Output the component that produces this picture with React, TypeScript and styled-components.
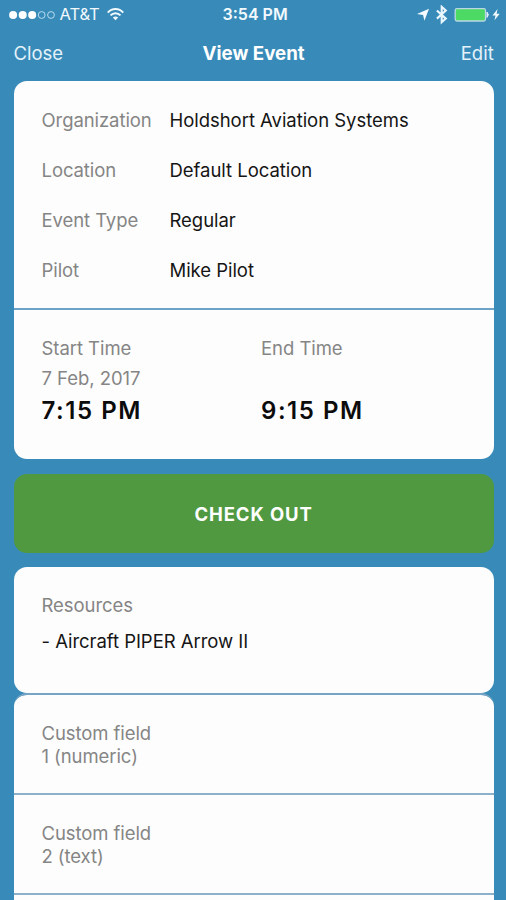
import React from "react";
import styled, { createGlobalStyle } from "styled-components";

const Global = createGlobalStyle`
  * { box-sizing: border-box; }
  html, body { margin: 0; background: #388bb9; }
  body { font-family: Inter, "Liberation Sans", sans-serif; }
`;

const Screen = styled.div`
  width: 506px;
  height: 900px;
  overflow: hidden;
  background: #388bb9;
  display: flex;
  flex-direction: column;
  padding: 0 12.3px 0 13.5px;
`;

const StatusBar = styled.div`
  display: grid;
  grid-template-columns: 1fr auto 1fr;
  align-items: center;
  height: 29px;
  flex: none;
  margin: 0 -6px 0 -5px;
  color: #f2f9fd;
`;

const Carrier = styled.div`
  display: flex;
  align-items: center;
  font-size: 16.5px;
  letter-spacing: -0.1px;
  line-height: 29px;
`;

const CarrierName = styled.span`
  margin: 0 7px 0 5px;
`;

const Clock = styled.div`
  font-size: 16px;
  font-weight: 600;
  line-height: 29px;
  margin-left: 2px;
`;

const Indicators = styled.div`
  display: flex;
  align-items: center;
  justify-content: flex-end;
`;

const NavBar = styled.div`
  display: grid;
  grid-template-columns: 1fr auto 1fr;
  align-items: center;
  height: 52px;
  flex: none;
  padding-bottom: 3px;
  color: #fff;
`;

const NavAction = styled.button<{ $end?: boolean }>`
  border: 0;
  padding: 0 0 2px;
  background: none;
  font: 400 18.5px/24px Inter, sans-serif;
  color: #e4f2fa;
  text-align: ${(p) => (p.$end ? "right" : "left")};
`;

const NavTitle = styled.h1`
  margin: 0;
  font-size: 18.7px;
  font-weight: 700;
  line-height: 24px;
`;

const Card = styled.section<{ $height: number; $gap?: number; $seam?: boolean }>`
  flex: none;
  height: ${(p) => p.$height}px;
  margin-bottom: ${(p) => p.$gap ?? 0}px;
  border-top: ${(p) => (p.$seam ? "2px solid #76a4c4" : "0")};
  border-radius: 13px;
  background: #fdfdfd;
  background-clip: padding-box;
`;

const Details = styled.dl`
  margin: 0;
  height: 228.5px;
  padding: 14px 28px 0;
  border-bottom: 2px solid #6ea3c8;
`;

const DetailRow = styled.div`
  display: grid;
  grid-template-columns: 128px 1fr;
  align-items: center;
  height: 50px;
`;

const Label = styled.dt`
  font-size: 18.5px;
  line-height: 23px;
  letter-spacing: -0.08px;
  color: #858585;
`;

const Value = styled.dd`
  margin: 0;
  font-size: 18.5px;
  line-height: 23px;
  letter-spacing: -0.04px;
  color: #151515;
`;

const Times = styled.div`
  display: grid;
  grid-template-columns: 219.5px 1fr;
  padding: 24px 28px 0;
`;

const TimeColumn = styled.div`
  display: grid;
  grid-template-rows: 29px 30px 36px;
  align-items: center;
`;

const Caption = styled.span`
  font-size: 18.5px;
  letter-spacing: -0.05px;
  color: #858585;
`;

const Time = styled.strong`
  font-size: 24px;
  font-weight: 600;
  letter-spacing: 1.55px;
  color: #0c0c0c;
`;

const CheckOut = styled.button`
  flex: none;
  height: 79px;
  margin: 0 0 14px;
  padding: 1px 0 0;
  border: 0;
  border-radius: 13px;
  background: #509941;
  color: #fff;
  font: 700 18.5px/24px Inter, sans-serif;
  letter-spacing: 0.9px;
`;

const Resources = styled.div`
  display: grid;
  grid-template-rows: 36px 37px;
  align-items: center;
  padding: 20.5px 28px 0;
`;

const CustomField = styled.div`
  height: 100.2px;
  padding: 27px 28px 0;
  border-bottom: 2px solid #8db1cb;
  font-size: 18.5px;
  line-height: 23px;
  letter-spacing: -0.08px;
  color: #858585;
`;

const CustomName = styled.div`
  width: 122px;
`;

const SignalDots = () => (
  <svg width="46" height="12" viewBox="0 0 46 12">
    {[4.1, 13.7, 23.2].map((x) => (
      <circle key={x} cx={x} cy="6" r="4" fill="#fff" />
    ))}
    {[32.7, 42].map((x) => (
      <circle key={x} cx={x} cy="6" r="3.4" fill="none" stroke="#b7dcef" strokeWidth="1" />
    ))}
  </svg>
);

const Wifi = () => (
  <svg width="17" height="13" viewBox="0 0 17 13" fill="none" stroke="#f2f9fd" strokeWidth="2">
    <path d="M.8 4.6C5-.1 12-.1 16.2 4.6M3.5 7.4c2.8-3 7.2-3 10 0" />
    <path d="M8.5 12.3 5.8 9.6c1.6-1.5 3.8-1.5 5.4 0Z" fill="#f2f9fd" stroke="none" />
  </svg>
);

const StatusIcons = () => (
  <svg width="84" height="20" viewBox="416 5 84 20">
    <path d="M429 8.7 424.4 20.7 423.1 14.9 417 14Z" fill="#f5fbff" />
    <path d="M436.9 10.5 445.8 18.6 441.7 22.2V6.8L445.8 10.5 436.9 18.6" fill="none" stroke="#eaf6fd" strokeWidth="2.1" />
    <rect x="455.2" y="8.6" width="30.3" height="12.4" rx="1.8" fill="#4cd964" stroke="#b9d8e3" strokeWidth="1.3" />
    <path d="M487 12.1q2.6 2.6 0 5.3Z" fill="#e2f1f7" stroke="#e2f1f7" />
    <path d="M497.6 9 492.5 15.4H495.5L494.5 20.3 499.7 13.7H496.6Z" fill="#f5fbff" />
  </svg>
);

const details = [
  ["Organization", "Holdshort Aviation Systems"],
  ["Location", "Default Location"],
  ["Event Type", "Regular"],
  ["Pilot", "Mike Pilot"],
];

const customFields = ["Custom field 1 (numeric)", "Custom field 2 (text)"];

export default function App() {
  return (
    <Screen>
      <Global />
      <StatusBar>
        <Carrier>
          <SignalDots />
          <CarrierName>AT&amp;T</CarrierName>
          <Wifi />
        </Carrier>
        <Clock>3:54 PM</Clock>
        <Indicators>
          <StatusIcons />
        </Indicators>
      </StatusBar>
      <NavBar>
        <NavAction>Close</NavAction>
        <NavTitle>View Event</NavTitle>
        <NavAction $end>Edit</NavAction>
      </NavBar>
      <Card $height={378} $gap={14.5}>
        <Details>
          {details.map(([label, value]) => (
            <DetailRow key={label}>
              <Label>{label}</Label>
              <Value>{value}</Value>
            </DetailRow>
          ))}
        </Details>
        <Times>
          <TimeColumn>
            <Caption>Start Time</Caption>
            <Caption>7 Feb, 2017</Caption>
            <Time>7:15 PM</Time>
          </TimeColumn>
          <TimeColumn>
            <Caption>End Time</Caption>
            <span />
            <Time>9:15 PM</Time>
          </TimeColumn>
        </Times>
      </Card>
      <CheckOut>CHECK OUT</CheckOut>
      <Card $height={126.5}>
        <Resources>
          <Caption>Resources</Caption>
          <Value as="span">- Aircraft PIPER Arrow II</Value>
        </Resources>
      </Card>
      <Card $height={260} $seam>
        {customFields.map((name) => (
          <CustomField key={name}>
            <CustomName>{name}</CustomName>
          </CustomField>
        ))}
      </Card>
    </Screen>
  );
}
